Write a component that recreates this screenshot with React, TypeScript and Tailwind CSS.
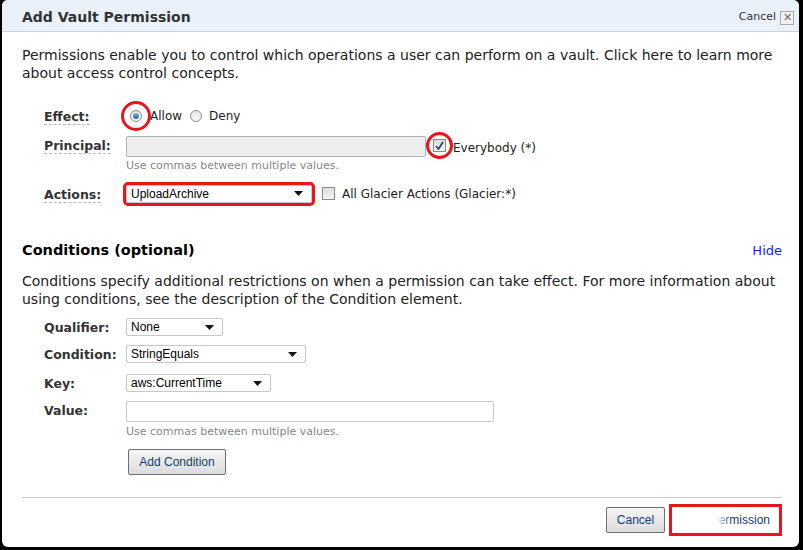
import React from "react";

const body = { fontFamily: '"DejaVu Sans", Verdana, sans-serif' };
const ui = { fontFamily: '"Liberation Sans", Arial, sans-serif' };

const Arrow = () => (
  <svg width="9" height="5" viewBox="0 0 9 5" className="shrink-0">
    <path d="M0 0h9L4.5 5z" fill="#111" />
  </svg>
);

const Select = ({ value, width, outlined }: { value: string; width: string; outlined?: boolean }) => (
  <div
    className={`${width} h-[18px] flex items-center justify-between pl-[4px] pr-[8px] bg-white border border-[#c8c8c8] rounded-[2px] text-[12px] text-black ${
      outlined ? "outline-[3px] outline-[#e8141e]" : ""
    }`}
    style={ui}
  >
    <span>{value}</span>
    <Arrow />
  </div>
);

const Label = ({ children, dotted }: { children: React.ReactNode; dotted?: boolean }) => (
  <div className="w-[82px] shrink-0 leading-[16px]">
    <span
      className={`text-[12.5px] font-bold text-[#333] ${dotted ? "border-b border-dashed border-[#bbb]" : ""}`}
      style={body}
    >
      {children}
    </span>
  </div>
);

const Radio = ({ checked }: { checked?: boolean }) => (
  <span className="w-[12px] h-[12px] rounded-full border border-[#8a8a8a] bg-gradient-to-b from-[#e8e8e8] to-[#fafafa] flex items-center justify-center shrink-0">
    {checked && <span className="w-[6px] h-[6px] rounded-full bg-gradient-to-b from-[#7ab8e8] to-[#1d5f9c]" />}
  </span>
);

const Check = ({ checked }: { checked?: boolean }) => (
  <span className="w-[13px] h-[13px] border border-[#8a8a8a] bg-gradient-to-b from-[#dcdcdc] to-[#f6f6f6] flex items-center justify-center shrink-0">
    {checked && (
      <svg width="9" height="9" viewBox="0 0 9 9">
        <path d="M1 5l2.5 3L8 1" stroke="#2a3f8f" strokeWidth="1.8" fill="none" />
      </svg>
    )}
  </span>
);

const Hint = () => (
  <div className="pl-[82px] text-[11px] text-[#888] leading-[14px]" style={body}>
    Use commas between multiple values.
  </div>
);

export default function App() {
  return (
    <div className="w-[803px] h-[550px] bg-black overflow-hidden">
      <div className="ml-[2px] w-[797px] h-[547px] bg-white rounded-[6px] overflow-hidden flex flex-col">
        <div className="h-[32px] shrink-0 bg-[#eaf1fb] border-b border-[#c3d5ea] flex items-center justify-between pl-[20px] pr-[5px] pt-[4px]">
          <span className="text-[14px] font-bold text-[#333]" style={body}>
            Add Vault Permission
          </span>
          <div className="flex items-center gap-[4px]">
            <span className="text-[11px] text-[#333]" style={body}>
              Cancel
            </span>
            <span className="w-[14px] h-[14px] border border-[#aaa] bg-[#f2f2f2] flex items-center justify-center text-[11px] text-[#666] leading-none" style={ui}>
              ✕
            </span>
          </div>
        </div>

        <div className="flex-1 px-[20px] pt-[14px] relative">
          <p className="text-[14px] leading-[18px] text-[#222] mr-[-8px]" style={body}>
            Permissions enable you to control which operations a user can perform on a vault. Click here to learn more about access control concepts.
          </p>

          <div className="pl-[22px] mt-[24px]">
            <div className="flex items-center h-[20px]">
              <Label dotted>Effect:</Label>
              <div className="relative flex items-center ml-[4px]">
                <Radio checked />
                <span className="absolute -left-[9px] -top-[9px] w-[30px] h-[30px] rounded-full border-[3px] border-[#e8141e]" />
              </div>
              <span className="ml-[8px] text-[12px] text-[#222]" style={body}>Allow</span>
              <span className="ml-[8px]"><Radio /></span>
              <span className="ml-[7px] text-[12px] text-[#222]" style={body}>Deny</span>
            </div>

            <div className="flex items-start mt-[10px]">
              <Label dotted>Principal:</Label>
              <div className="w-[300px] h-[21px] bg-[#eeeeee] border border-[#b3b3b3] rounded-[2px]" />
              <div className="relative ml-[7px] mt-[3px]">
                <Check checked />
                <span className="absolute -left-[7px] -top-[7px] w-[27px] h-[27px] rounded-full border-[3px] border-[#e8141e]" />
              </div>
              <span className="ml-[7px] mt-[3px] text-[12px] text-[#222]" style={body}>Everybody (*)</span>
            </div>
            <div className="mt-[2px]"><Hint /></div>

            <div className="flex items-center mt-[9px] h-[23px]">
              <Label dotted>Actions:</Label>
              <Select value="UploadArchive" width="w-[186px]" outlined />
              <span className="ml-[10px]"><Check /></span>
              <span className="ml-[7px] text-[12px] text-[#222]" style={body}>All Glacier Actions (Glacier:*)</span>
            </div>
          </div>

          <div className="flex items-center justify-between mt-[36px] h-[20px]">
            <span className="text-[14.5px] font-bold text-black" style={body}>Conditions (optional)</span>
            <span className="text-[13px] text-[#1a1aff] mr-[-3px]" style={body}>Hide</span>
          </div>

          <p className="mt-[11px] text-[14px] leading-[18px] text-[#222] mr-[-8px]" style={body}>
            Conditions specify additional restrictions on when a permission can take effect. For more information about using conditions, see the description of the Condition element.
          </p>

          <div className="pl-[22px] mt-[10px] flex flex-col">
            <div className="flex items-center h-[18px]">
              <Label>Qualifier:</Label>
              <Select value="None" width="w-[97px]" />
            </div>
            <div className="flex items-center h-[18px] mt-[9px]">
              <Label>Condition:</Label>
              <Select value="StringEquals" width="w-[180px]" />
            </div>
            <div className="flex items-center h-[18px] mt-[11px]">
              <Label>Key:</Label>
              <Select value="aws:CurrentTime" width="w-[145px]" />
            </div>
            <div className="flex items-start mt-[9px]">
              <Label>Value:</Label>
              <div className="w-[368px] h-[21px] bg-white border border-[#c8c8c8] rounded-[2px]" />
            </div>
            <div className="mt-[3px]"><Hint /></div>
            <div className="pl-[84px] mt-[9px]">
              <button
                className="w-[98px] h-[26px] border border-[#707070] rounded-[2px] bg-gradient-to-b from-[#f5f5f5] to-[#dcdcdc] text-[12px] text-[#133c7a]"
                style={ui}
              >
                Add Condition
              </button>
            </div>
          </div>

          <div className="mt-[22px] h-px bg-[#c8c8c8] mr-[-3px]" />

          <div className="flex justify-end items-center mt-[6px] mr-[-3px]">
            <button
              className="w-[59px] h-[26px] border border-[#707070] rounded-[2px] bg-gradient-to-b from-[#f5f5f5] to-[#dcdcdc] text-[12px] text-[#133c7a]"
              style={ui}
            >
              Cancel
            </button>
            <div className="relative ml-[4px] w-[113px] h-[32px] border-[3px] border-[#e8141e] bg-white flex items-center justify-end pr-[9px]">
              <span className="text-[12px] text-[#133c7a]" style={ui}>Add Permission</span>
              <span className="absolute left-0 top-0 h-full w-[44px] bg-white" />
              <span className="absolute left-[44px] top-0 h-full w-[16px] bg-gradient-to-r from-white to-transparent" />
            </div>
          </div>
        </div>
      </div>
    </div>
  );
}
